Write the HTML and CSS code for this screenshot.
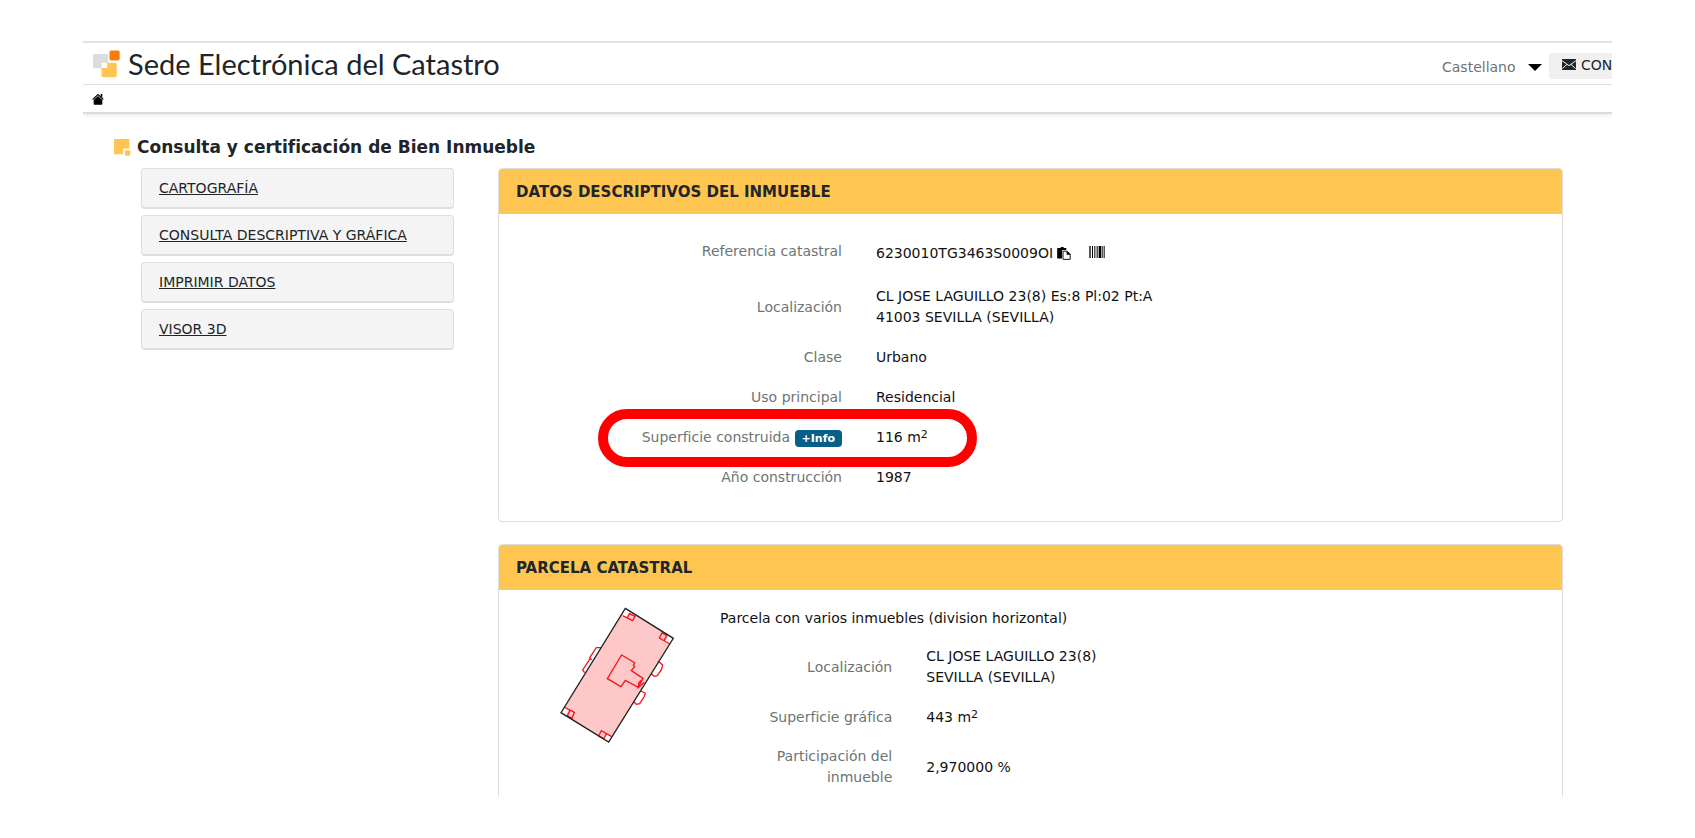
FILE: index.html
```html
<!DOCTYPE html>
<html lang="es">
<head>
<meta charset="utf-8">
<title>Sede Electrónica del Catastro</title>
<link rel="stylesheet" href="styles.css">
</head>
<body>
<div class="frame">
  <header class="topbar">
    <a class="brand" href="#">
      <svg class="brand-logo" viewBox="0 0 82 84" aria-hidden="true">
        <rect x="0" y="12" width="46" height="43" rx="3" fill="#dcdcde"/>
        <rect x="26" y="38" width="46" height="44" rx="5" fill="#fec651"/>
        <path d="M26 38h17v13q0 3-3 3H26z" fill="#fff"/>
        <rect x="47" y="-2" width="36" height="35" rx="6" fill="#fff"/>
        <rect x="50" y="1" width="31" height="30" rx="5" fill="#ff7a0c"/>
      </svg>
      <span class="brand-name">Sede Electrónica del Catastro</span>
    </a>
    <div class="tools">
      <div class="language">
        <select aria-label="Idioma"><option>Castellano</option></select>
        <svg class="caret" viewBox="0 0 14 7" aria-hidden="true"><path d="M0 0h14L7 7z"/></svg>
      </div>
      <button class="contact" type="button">
        <svg class="mail" viewBox="0 0 42 33" aria-hidden="true"><rect width="42" height="33" fill="#212529"/><path d="M0 5l21 15L42 5M1 29l14-13M41 29L27 16" fill="none" stroke="#f0f0f0" stroke-width="3"/></svg>CONTACTAR
      </button>
    </div>
  </header>
  <nav class="crumbs" aria-label="Ruta">
    <a href="#" aria-label="Inicio"><svg class="home" viewBox="0 0 36 36" aria-hidden="true"><path d="M18 2L35 18l-2 3L18 7 3 21l-2-3z"/><path d="M18 9l13 12v12q0 2-2 2H7q-2 0-2-2V21zM26 3h5v11l-5-5z"/></svg></a>
  </nav>
  <main>
    <h1 class="title">
      <svg class="title-mark" viewBox="0 0 50 50" aria-hidden="true"><path d="M0 0h45v28H27v17H0z" fill="#fec651"/><rect x="32" y="33" width="16" height="16" rx="2" fill="#fec651"/></svg>
      Consulta y certificación de Bien Inmueble
    </h1>
    <div class="columns">
      <aside class="menu">
        <a class="menu-item" href="#">CARTOGRAFÍA</a>
        <a class="menu-item" href="#">CONSULTA DESCRIPTIVA Y GRÁFICA</a>
        <a class="menu-item" href="#">IMPRIMIR DATOS</a>
        <a class="menu-item" href="#">VISOR 3D</a>
      </aside>
      <div class="panels">
        <section class="panel">
          <h2 class="panel-head">DATOS DESCRIPTIVOS DEL INMUEBLE</h2>
          <dl class="panel-body property">
            <div class="row row-ref">
              <dt>Referencia catastral</dt>
              <dd>
                <span class="ref">6230010TG3463S0009OI <button class="icon-button" type="button" aria-label="Copiar"><svg class="copy" viewBox="0 0 42 40" aria-hidden="true"><path d="M2 3h8l2-3h7l2 3h7v6H17q-2 0-2 2v24H2q-2 0-2-2V5q0-2 2-2z"/><path d="M18 13h13l9 9v16H18z" fill="#fff" stroke="#111" stroke-width="3"/><path d="M29 12v12h12z"/></svg></button></span>
                <button class="icon-button" type="button" aria-label="Código de barras"><svg class="barcode" viewBox="0 0 46 36" aria-hidden="true"><path d="M0 0h4v36H0zM8 0h3v36H8zM15 0h3v36h-3zM22 0h3v36h-3zM28 0h7v36h-7zM37 0h3v36h-3zM43 0h3v36h-3z"/></svg></button>
              </dd>
            </div>
            <div class="row"><dt>Localización</dt><dd>CL JOSE LAGUILLO 23(8) Es:8 Pl:02 Pt:A<br>41003 SEVILLA (SEVILLA)</dd></div>
            <div class="row"><dt>Clase</dt><dd>Urbano</dd></div>
            <div class="row"><dt>Uso principal</dt><dd>Residencial</dd></div>
            <div class="row highlighted"><dt>Superficie construida <button class="info" type="button">+Info</button></dt><dd>116 m<sup>2</sup></dd></div>
            <div class="row"><dt>Año construcción</dt><dd>1987</dd></div>
          </dl>
        </section>
        <section class="panel">
          <h2 class="panel-head">PARCELA CATASTRAL</h2>
          <div class="panel-body parcel">
            <svg class="plan" viewBox="210 230 345 411" role="img" aria-label="Plano de la parcela">
              <path d="M406 234L550 324 356 635 213 547z" fill="#ffc8c8"/>
              <path d="M406 234l14 8-6 20-18-6zM536 315l14 9-9 17-15-6zM226 530l10 12-8 14-15-9zM350 612l14 6-8 17-20-12z" fill="#fff"/>
              <g fill="none" stroke="#f8141c" stroke-width="4">
                <path d="M398 256l30 15 7-13-17-8-7 14M540 341l-32-18 8-15 14 7-8 16M222 530l31 16-7 18-14-8 9-18M365 619l-31-18-8 16 16 8 8-16"/>
                <path d="M333 352h-14l-20 30 4 5-4 0-21 32 6 8M504 392l14 12-4 14-12 18-10 2-8-8M452 482l14 6-4 12-13 20-10 2-8-8"/>
                <path d="M395 374l39 23-4 8 4 4-10 12 35 23-14 27-39-21-13 19-41-24zM459 446l-12 10-2 16 18-16"/>
              </g>
              <path d="M406 234L550 324 356 635 213 547z" fill="none" stroke="#222" stroke-width="4"/>
            </svg>
            <div class="parcel-data">
              <p>Parcela con varios inmuebles (division horizontal)</p>
              <dl>
                <div class="row"><dt>Localización</dt><dd>CL JOSE LAGUILLO 23(8)<br>SEVILLA (SEVILLA)</dd></div>
                <div class="row"><dt>Superficie gráfica</dt><dd>443 m<sup>2</sup></dd></div>
                <div class="row"><dt>Participación del inmueble</dt><dd>2,970000 %</dd></div>
              </dl>
            </div>
          </div>
        </section>
      </div>
    </div>
  </main>
</div>
</body>
</html>
```
FILE: styles.css
```css
*, *::after { box-sizing: border-box; }
body {
  margin: 0;
  background: #fff;
  color: #111;
  font: 14px/21px Verdana, "DejaVu Sans", sans-serif;
}
h1, h2, p, dl, dd { margin: 0; }
button, select { font: inherit; color: inherit; border: 0; padding: 0; background: none; }
sup { font-size: 11px; line-height: 0; vertical-align: 4px; }

.frame {
  height: calc(100vh - 82px);
  margin: 41px 83px;
  overflow: hidden;
}

.topbar {
  display: flex;
  align-items: center;
  justify-content: space-between;
  height: 44px;
  padding-left: 10px;
  border-top: 2px solid #e2e2e2;
  border-bottom: 1px solid #dedede;
}
.brand { display: flex; align-items: center; gap: 8px; color: #212529; text-decoration: none; }
.brand-logo { width: 27px; height: 28px; }
.brand-name { font: 29px/40px "Century Gothic", Lato, sans-serif; }
.tools { display: flex; align-items: center; gap: 7px; padding-top: 4px; }
.language { display: flex; align-items: center; gap: 12px; padding-top: 4px; color: #6c7573; }
.language select { appearance: none; }
.caret { width: 14px; height: 7px; fill: #000; }
.contact {
  width: 63px;
  height: 26px;
  padding-left: 13px;
  border-radius: 3px 0 0 3px;
  overflow: hidden;
  background: #f0f0f0;
  color: #212529;
  text-align: left;
  white-space: nowrap;
}
.mail { width: 14px; height: 11px; margin-right: 5px; }

.crumbs {
  height: 29px;
  padding: 8px 9px;
  border-bottom: 2px solid #dcdcdc;
  box-shadow: 0 2px 4px #eee;
  line-height: 0;
}
.home { width: 12px; height: 12px; }

.title {
  display: flex;
  align-items: center;
  gap: 6px;
  padding: 21px 0 9px 31px;
  color: #212529;
  font-size: 17px;
  line-height: 24px;
}
.title-mark { width: 17px; height: 17px; }

.columns { display: flex; gap: 44px; padding: 0 49px 0 58px; }
.menu { display: flex; flex: 0 0 313px; flex-direction: column; gap: 6px; }
.menu-item {
  padding: 9px 17px;
  border: 1px solid #dedede;
  border-bottom-width: 2px;
  border-radius: 4px;
  background: #f4f4f4;
  color: #212529;
  line-height: 20px;
}
.panels { display: flex; flex: 1; flex-direction: column; gap: 22px; }
.panel { border: 1px solid #dedede; border-radius: 4px; }
.panel-head {
  padding: 13px 17px 11px;
  border-radius: 3px 3px 0 0;
  background: #fec651;
  color: #212529;
  font-size: 15px;
  line-height: 21px;
}
.panel-body { padding: 17px; }
.property { padding-top: 16px; padding-bottom: 24px; }

.row { display: flex; align-items: center; min-height: 40px; padding: 9px 0; }
.row dt { flex: 0 0 33.333%; padding: 0 17px; color: #6c7573; text-align: right; }
.row dd { flex: 1; padding: 0 17px; }
.row-ref { padding-bottom: 13px; }
.row-ref dd { display: flex; align-items: center; gap: 18px; }
.row-ref .ref { padding-top: 4px; }
.icon-button { display: inline-flex; vertical-align: -2px; }
.copy { width: 14px; height: 13px; }
.barcode { width: 16px; height: 12px; }
.info {
  padding: 0 7px;
  border-radius: 4px;
  background: #055f87;
  color: #fff;
  font-size: 11px;
  font-weight: bold;
  line-height: 17px;
}
.highlighted { position: relative; }
.highlighted::after {
  content: "";
  position: absolute;
  top: -8px;
  left: calc(33.333% - 261px);
  width: 379px;
  height: 58px;
  border: 10px solid #f00;
  border-radius: 29px;
  pointer-events: none;
}

.parcel { display: flex; }
.plan { flex: none; width: 115px; height: 137px; margin: 0 28px 0 44px; }
.parcel-data { flex: 1; padding-right: 17px; }
.parcel-data p { padding: 1px 17px 8px; }
.parcel-data dt { flex-basis: 25%; }
```
